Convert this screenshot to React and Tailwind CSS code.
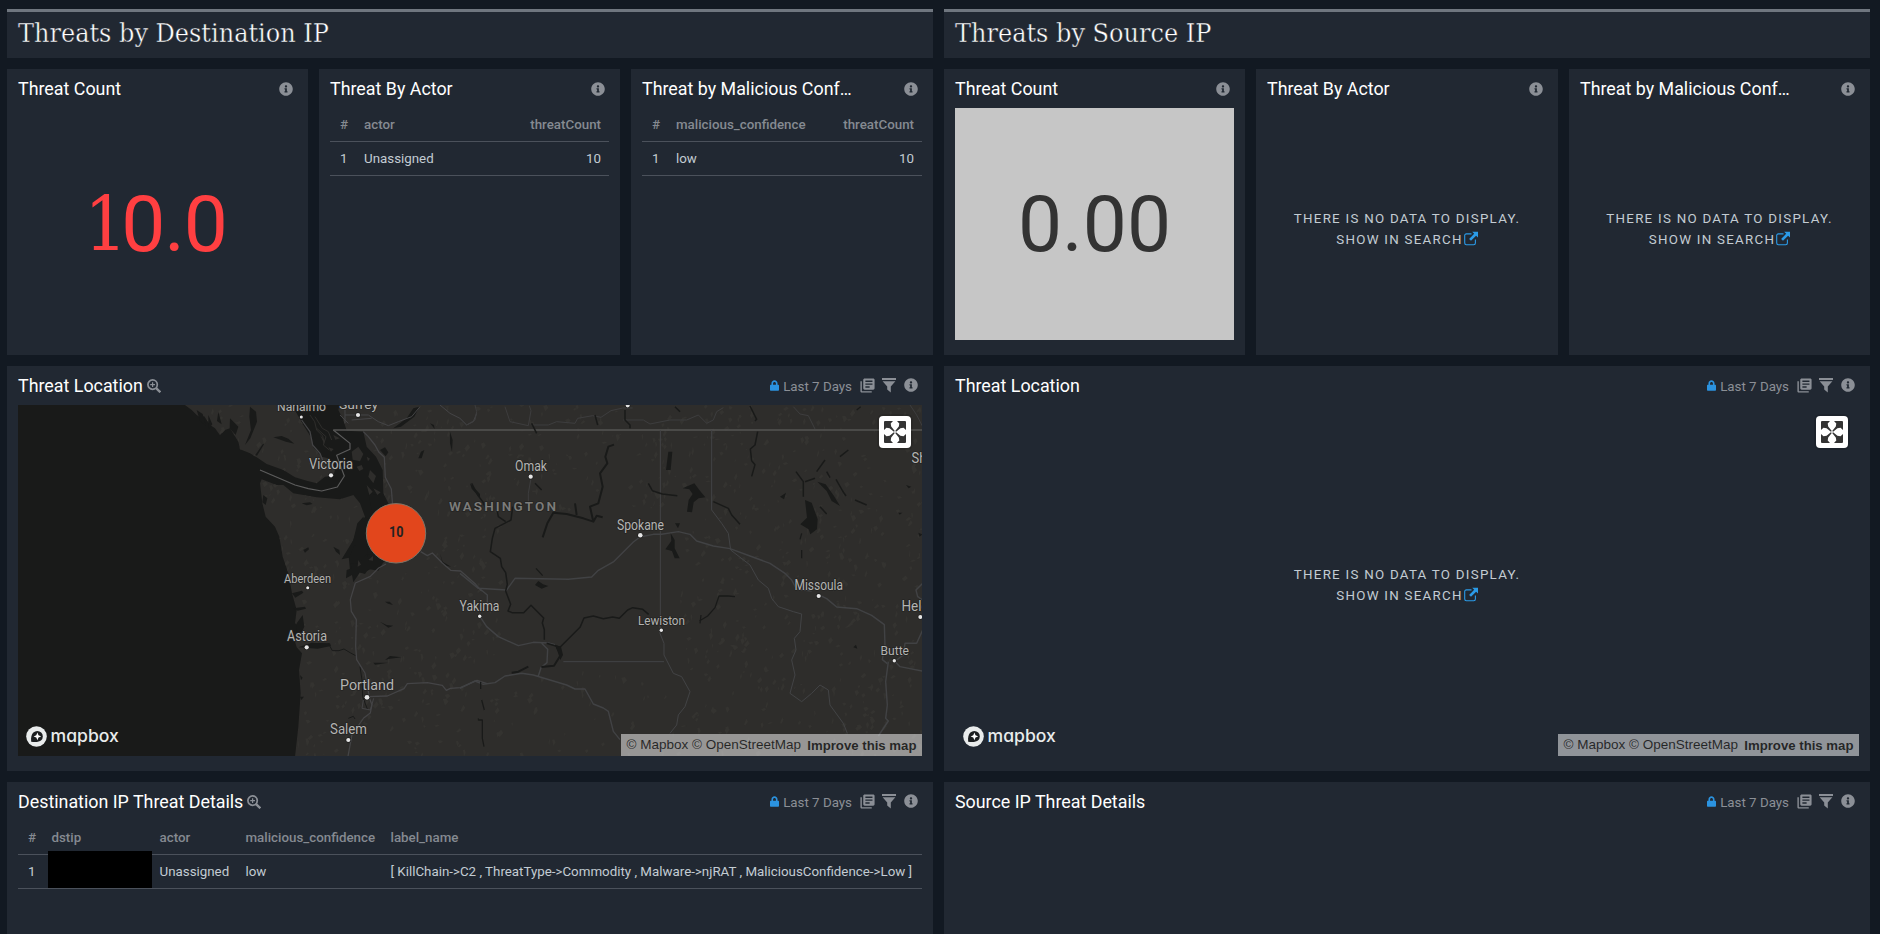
import { FaInfoCircle, FaLock } from "react-icons/fa";
import { MdLibraryBooks } from "react-icons/md";

/* ---------- icons ---------- */

function FilterIcon() {
  return (
    <svg className="h-[15px] w-[14px]" viewBox="0 0 14 15" fill="currentColor">
      <path d="M0 0h14v2H0z" />
      <path d="M0.6 3.2h12.8L8.8 8.6V14.6L5.2 11.6V8.6z" />
    </svg>
  );
}

function ZoomIcon() {
  return (
    <svg className="h-[14px] w-[14px] text-[#8b8f96]" viewBox="0 0 14 14" fill="none" stroke="currentColor">
      <circle cx="5.6" cy="5.6" r="4.7" strokeWidth="1.7" />
      <path d="M5.6 3.2v4.8M3.2 5.6h4.8" strokeWidth="1.2" />
      <path d="M9.1 9.1l4.2 4.2" strokeWidth="2.3" />
    </svg>
  );
}

function ExternalIcon() {
  return (
    <svg className="ml-px inline-block h-[15px] w-[14px] align-[-2px] text-[#2b9be8]" viewBox="0 0 14 15" fill="none">
      <path d="M7.5 2.9H2.4C1.4 2.9 0.7 3.6 0.7 4.6v7.4c0 1 .7 1.7 1.7 1.7h7.3c1 0 1.7-.7 1.7-1.7V8.4" stroke="currentColor" strokeWidth="1.1" />
      <path d="M8.2 0.8H14V6.6L12.1 4.7 7 9.8 5.1 7.9 10.2 2.8z" fill="currentColor" />
    </svg>
  );
}

function ExpandIcon() {
  return (
    <svg className="h-[22px] w-[22px]" viewBox="0 0 22 22" fill="#333">
      {[0, 90, 180, 270].map((a) => (
        <path key={a} transform={`rotate(${a} 11 11)`} d="M1 0H9L6.7 2.5 7.2 5.6 10.8 9.9 9.9 10.8 5.6 7.2 2.5 6.7 0 9V1A1 1 0 0 1 1 0z" />
      ))}
    </svg>
  );
}

/* ---------- panel pieces ---------- */

function Toolbar() {
  return (
    <div className="flex items-center text-[#8b8f96]">
      <FaLock className="mr-[4px] h-[11px] w-[9px] text-[#2b93e0]" />
      <span className="mr-[6.5px] pt-[2px] text-[13.33px]">Last 7 Days</span>
      <MdLibraryBooks className="mr-[6.5px] size-[17px]" />
      <span className="mr-[7.5px]">
        <FilterIcon />
      </span>
      <FaInfoCircle className="size-[14px]" />
    </div>
  );
}

function Panel({ title, zoom, full, className = "", children }) {
  return (
    <section className={`flex min-w-0 flex-col bg-[#212832] px-[11px] ${className}`}>
      <header className="flex h-[39px] shrink-0 items-center justify-between pr-[4.5px]">
        <h2 className="flex items-center gap-1 whitespace-nowrap pt-px text-[17.85px] leading-[20px] text-white">
          {title}
          {zoom && <ZoomIcon />}
        </h2>
        {full ? <Toolbar /> : <FaInfoCircle className="size-[14px] text-[#8b8f96]" />}
      </header>
      {children}
    </section>
  );
}

function BigNumber({ className, children }) {
  return (
    <div className={`flex h-[232px] items-center justify-center text-[78.5px] leading-none ${className}`}>{children}</div>
  );
}

function NoData({ className }) {
  return (
    <div className={`flex flex-col items-center justify-center pt-[9px] text-[13.33px] leading-[21px] tracking-[1.26px] text-[#c3ccd3] ${className}`}>
      <span>THERE IS NO DATA TO DISPLAY.</span>
      <span>
        SHOW IN SEARCH
        <ExternalIcon />
      </span>
    </div>
  );
}

function CountTable({ field, value }) {
  return (
    <div className="text-[13.33px] text-[#c3ccd3]">
      <div className="flex h-[34px] items-center border-b border-[#4b515b] pr-2 pl-[10px] font-medium text-[#858a91]">
        <span className="w-6">#</span>
        <span className="flex-1">{field}</span>
        <span>threatCount</span>
      </div>
      <div className="flex h-[34px] items-center border-b border-[#4b515b] pr-2 pl-[10px]">
        <span className="w-6">1</span>
        <span className="flex-1">{value}</span>
        <span>10</span>
      </div>
    </div>
  );
}

/* ---------- map ---------- */

const CITIES = [
  ["Nanaimo", 277, 411.3, 49, 12.5],
  ["Surrey", 339, 409, 39, 13.5],
  ["Victoria", 309, 469, 44, 13.8],
  ["Aberdeen", 284, 582.7, 47, 12.7],
  ["Astoria", 287, 641.3, 40, 13.8],
  ["Portland", 340, 690.3, 54, 14.8],
  ["Salem", 330, 734, 37, 13.8],
  ["Omak", 515, 471, 32, 13.8],
  ["Spokane", 617, 529.5, 47, 13.8],
  ["Missoula", 794.5, 590, 48.5, 13.8],
  ["Yakima", 459.5, 610.7, 40, 13.8],
  ["Lewiston", 638, 624.7, 47, 13.3],
  ["Helena", 901.5, 610.7, 42, 13.8],
  ["Butte", 880.5, 654.7, 28.5, 13.3],
  ["Shelby", 911.5, 463, 38, 13.8],
];

const DOTS = [
  [301.3, 417, 1.5], [358, 415, 2.1], [331, 475.3, 2.1], [307.7, 587.7, 1.5], [306.7, 647.3, 2.1],
  [367, 697.3, 2.4], [348.3, 740, 2.1], [530.7, 476.7, 2.1], [627.7, 405.3, 2.1], [640.3, 535.3, 2.3],
  [818.7, 596, 2.1], [479.7, 616.3, 1.7], [661.3, 630.3, 1.7], [920.3, 617, 2], [894.3, 660.7, 1.7],
];

function makeTerrain() {
  let seed = 42;
  const rnd = () => {
    seed = (seed * 1664525 + 1013904223) % 4294967296;
    return seed / 4294967296;
  };
  let d = "";
  for (let i = 0; i < 1500; i++) {
    const x = 190 + rnd() * 735;
    const y = 405 + rnd() * 351;
    const keep = rnd();
    const l = 1.5 + rnd() * 6;
    const w = 0.8 + rnd() * 3;
    const t = rnd() * 2;
    const basin = x > 500 && x < 680 && y > 510 && y < 660;
    if (basin || (x < 690 && y > 640 && x > 470 && keep > 0.35)) continue;
    const f = (n) => n.toFixed(1);
    d += `M${f(x)} ${f(y)}l${f(w)} ${f(-l * t * 0.5)}l${f(w * 0.6)} ${f(l * 0.5)}l${f(-w)} ${f(l * 0.6)}z`;
  }
  return d;
}
const TERRAIN = makeTerrain();

function MapDrawing() {
  return (
    <svg className="block h-[351px] w-[904px]" viewBox="18 405 904 351">
      <defs>
        <clipPath id="land">
          <path transform="translate(0 360) scale(.33333)" d="M548 130L575 150 590 165 605 175 612 168 630 195 645 205 660 226 675 210 690 205 715 245 720 268 750 280 770 292 800 312 850 330 885 352 920 362 950 370 975 350 1000 348 1005 330 985 295 965 290 940 262 935 235 910 195 890 160 870 130zM885 1190L895 1100 902 1000 897 930 906 880 890 862 885 845 905 830 900 800 885 790 890 750 876 700 865 640 848 590 838 530 825 500 797 470 787 430 780 370 785 358 830 375 850 375 880 400 950 412 1020 418 1060 405 1080 430 1095 470 1075 500 1060 540 1045 580 1050 630 1090 640 1140 610 1170 600 1170 440 1150 400 1148 330 1128 290 1100 260 1090 215 1040 212 1030 180 1015 150 1020 130H2800V1190z" />
        </clipPath>
      </defs>
      <path d="M18 405h904v351H18z" fill="#191a19" />
      <g clipPath="url(#land)">
        <path d="M18 405h904v351H18z" fill="#2e2d2b" />
        <path d={TERRAIN} fill="#343330" />
      </g>

      {/* coast and Puget Sound, western half */}
      <g transform="translate(0 360) scale(.33333)" strokeLinejoin="round">
        <g fill="#191a19">
          <path d="M820 232l25-4 20 8 18 15-25-6zM590 150l18 12 10 35-18-15zM625 165l12 28-12 15zM655 155l10 38-14-10zM690 175l25 25-8 25-18-20zM750 140l18 15 3 30-20 50-16 20 18-45-5-40z" />
          <path d="M766 285l22-32 5-2-22 36zM790 405l12 10-5 20-10-8zM905 430l25-3 8 5-18 4zM910 570l15-8 2 6-12 10z" />
          <path d="M1090 470l-18 20-12 50-35 58 22-5 15-35 25-22 15-25zM1000 560l18 10 2 15-12-10z" />
          <path d="M1095 470l18 12 2 40-15 30 5 50 40-30 10-20zM1040 630l15-5-4-15 24 2 25-30 30 5 45-15 15 15-40 20-15 25-30-5-10 15-15-5-20 30-4-22-18 10z" />
          <path d="M1140 270l15-8 10 15-8 12zM1105 400l35 5 20 25-15 50-30-30zM1255 295l8-20 10-5-8 25zM1350 215l8 25-2 35-6-25zM1290 190l12 5 2 12z" />
          <path d="M1180 205l40-30 20-30 18-5-15 30-40 30zM1410 370l30 32v12l-25-28z" />
          <path d="M876 700l30-8 4 6-24 15zM880 745l35-5 3 6-25 6zM890 790l18-25 5 35-12 25-12-8zM895 862l40-14 55 2 3 8-40 8-30-2z" />
          <path d="M1155 725l14 0 10 10-15-4zM1140 785l20 10 20 2-15 6zM1120 908l45 0-40 6zM1155 900l15-12 35 4-35 4zM1320 580l8 25 25 15-15-3-10-5zM900 1010l12 0-8 10zM1055 1075l15-5M900 945l8 8-5 8z" />
        </g>
        <g fill="#2e2d2b">
          <path d="M1055 275l20-15 15 22-10 22-22-5zM1070 320l15-5 5 12-12 6zM1110 330l18 18-8 22-15-20zM1100 375l18 20-10 10zM1120 385l22 12-10 8zM1100 290l10 6-6 8zM985 262l16 5-8 8zM960 225l14 16-4 4zM1000 225l20 10-14 4zM1040 190l10 4-6 6z" />
          <path d="M1110 500l18 20-8 20-10-10zM1075 600l8 14-10 6zM1105 600l14-12 0 14z" />
        </g>
        <path d="M930 165l14 20 6 25 18 18 4 22M945 170l22 35 18 10 10 25M950 205l28 25-8 25 18 15" stroke="#2e2d2b" strokeWidth="3" fill="none" />
        <path d="M985 850l12 22 20 0 15-5 20 12 15 8M1080 920l6 40 2 50 15 40M1045 1075l15-6 5 8M1435 1075v6" stroke="#191a19" strokeWidth="3" fill="none" />
        <g fill="none" stroke="#444446" strokeWidth="3.8">
          <path d="M905 180l25 35 8 40 22 25 8 20M1090 215l15 15 20 25 12 22 16 15 3 60 18 35 4 50" />
          <path d="M1158 612l-22 12-25 25-45 20-15 50 3 35 15 25-2 80 3 40 25 40 10 55 3 20 8 20-5 25-20 15-35 50-12 65M1102 1010l60-2 50-22 10-15 60-3 45 8 12 15 12-6 30-2 50-22 30 10" />
          <path d="M1262 575l20 12 15-8 30 30 25 22 30 2 45 40 18 20" />
          <path d="M1020 165l25 25M1035 165l70 0 30 20 30 12 30-12 40-15 25-30M1035 150v40M1055 180l60-5M1320 135l30 25 30 15 20 20 20-10 10-25" strokeWidth="3" />
          <path d="M1090 1020l-4 25 25 5 10-35" strokeWidth="3" />
        </g>
        <path d="M780 330L885 375 925 386 965 393 1012 381 1033 348 1010 286 1050 268V250L1000 210" stroke="#5c5c5c" strokeWidth="3.5" fill="none" />
        <path d="M1000 210H2770" stroke="#555553" strokeWidth="5" />
      </g>

      {/* interior, eastern half */}
      <g transform="translate(460 360) scale(.33333)" fill="none" strokeLinejoin="round">
        <g stroke="#424345" strokeWidth="3">
          <path d="M601 210V770L600 820 612 850V885L640 940 665 950 690 995 675 1040 655 1065 650 1095 630 1120M310 905H612M755 210V450L785 490 805 520 812 570 870 615 895 660 925 685 935 715 955 740 1000 755 1025 762 1020 815 1003 835 1008 870 995 900 1005 945 990 1000 1025 1025 1055 1000 1080 975 1105 990 1110 1035 1150 1090 1162 1120" />
          <path d="M0 175L20 195 45 180 50 155 45 135M135 140l15 45 55 12 8-45-5-15M215 195l50 0 25-10 55 5 8-15 45-8 25 5 30-20 35-8 30 0M490 180l60 0 20 12 60-12 50 0 35-15 25 25 20-10 10-25 20-12M1000 140l20 22 25 5 20 40M1350 135l20 30 18 35M205 430v-30l8-45" stroke="#3d3d3e" />
        </g>
        <g stroke="#414244" strokeWidth="4.3">
          <path d="M0 640l55 45 85 5 25-35 160 3 70-7 20-20 45-25 60-60 20-15 40-8 25 0 50-8 35 8 20 20 50 15 50 8 60 22 60 22 45 30 20 20 15 28 45 5M1080 706l20 10 30 25 60 5 45 20 38 28 2 60-8 45 15 12" />
          <path d="M60 770l20 30 35 30 60 27 45-10 45 2 20 5M60 687l22 18v25M245 850l18 18-2 40-18 15-8 25M0 985l45-22 25 10 35-5 30-20 50-8 35 5 100 30 25 12h30l25 45 30 12 15 10 15 60 20 25" />
          <path d="M1303 902l17 18 70 14M1285 905l-8 60 5 70-5 40 8 8-30 45M1310 900l20-15 5-35h35l18-40M1388 670l-20 20 5 20 15 10" />
        </g>
        <g stroke="#191a19" strokeWidth="6">
          <path d="M462 254L445 260 436 290 442 310 420 340 428 380 415 430 390 440 400 485 370 475 320 462 280 458 262 490 248 532M400 485l10-18 18 5M345 430l5 35" />
          <path d="M158 440l-5 40-48 25-8 30-6 40 30 20 4 25 12 18 5 35-5 20 15 40-8 20 12 5h35l22-22 38 38-4 15 6 20v30M110 445l5 25 22 15M35 370l18 35 15 20 12 25" strokeWidth="4.5" />
          <path d="M260 850l40 12 60-60 12-28 28-6 30 8 28-5 20 4 25-25 15-7 30 5 18 15" strokeWidth="4.5" />
          <path d="M290 860l12 25-20 32-38 4M205 920l-30 15-20 3" strokeWidth="6" />
          <path d="M495 150l0 30 15 15v10M645 140l15 15M870 138l20 40-5 5M893 215l-8 40-14 12 4 35 10 12-10 35M565 370l12 22 30 10 45 5M760 425l45 20 10 20 25 28M1008 335l22 30v45M1035 365l30-10M1070 335l25-35M1140 290l25-20M1100 335l10 18M1128 358l20 35 10 15M1185 420l35 15M1080 440l20 22M405 165l8 30M215 190l15 30M225 370l20 20" strokeWidth="4.5" />
          <path d="M825 710l-20-2-28 0-12 35-22 25-25 15M720 790l3-25M1025 520l-5 18M1025 570l0 25M228 625l20 22M1190 150l12-10M62 965v22M65 1020l8 30M55 1080l12 0v55l5 25" strokeWidth="3.8" />
        </g>
        <g fill="#191a19">
          <path d="M625 275l12 0-5 55-14 0zM668 385l35-15 15 20 18 22-20 3-15 12-5 30-15-2 5-35 12-18-10-14zM632 520l12 20 0 25 15 30-15 0-8-22-20-5 18-25zM225 675l10-12 14 10 16 5-20 8zM1035 420l20 8 18 50-2 30-20 15-5-15-25-15 20-20z" />
          <path d="M1072 365l25 8 25 35 18 30-25-15-15-30zM960 410l18-12-6 20zM1338 375l16 5-8 5zM1315 458l12 0-8 6zM1375 518l12 5-8 8zM1180 862l8-8 4 12zM645 490l15 0-6 15zM285 855l18 5 6 25-8 15-8-25z" />
        </g>
      </g>

      <g fontFamily="Roboto, sans-serif" fill="#b4b4b2" stroke="#232322" strokeWidth="1.6" paintOrder="stroke" strokeLinejoin="round">
        {CITIES.map(([name, x, y, w, size]) => (
          <text key={name} x={x} y={y} fontSize={size} textLength={w} lengthAdjust="spacingAndGlyphs">
            {name}
          </text>
        ))}
        <text x="449" y="511.3" fontSize="13.5" fontWeight="600" textLength="107" fill="#7c7c7a">
          WASHINGTON
        </text>
      </g>
      {DOTS.map(([x, y, r]) => (
        <circle key={x} cx={x} cy={y} r={r} fill="#e6e6e6" stroke="#1c1c1c" strokeWidth="1.2" paintOrder="stroke" />
      ))}
      <circle cx="396" cy="533.3" r="29.7" fill="#e2461c" stroke="#7d7568" strokeWidth="1" />
      <text x="389" y="537" fontFamily="Roboto, sans-serif" fontWeight="700" fontSize="14.3" textLength="14.5" lengthAdjust="spacingAndGlyphs" fill="#222">
        10
      </text>
    </svg>
  );
}

function MapboxLogo() {
  return (
    <div className="absolute bottom-[9px] left-[8px] flex h-[21px] items-center">
      <svg className="size-[21px]" viewBox="0 0 21 21">
        <circle cx="10.5" cy="10.5" r="10.3" fill="#e9ecec" />
        <path d="M5.2 15.8C4.6 11.5 5.6 8.3 7.4 6.5a5.5 5.5 0 0 1 7.8 7.8C13.4 16 9.7 16.5 5.2 15.8z" fill="#1b1e20" />
        <path d="M11.4 6.6l1.1 2.7 2.7 1.1-2.7 1.1-1.1 2.7-1.1-2.7-2.7-1.1 2.7-1.1z" fill="#fff" />
      </svg>
      <span className="ml-[3.5px] pb-[2px] font-['Inter',sans-serif] text-[17.6px] leading-none font-medium text-[#e9ecec] [font-feature-settings:'cv11']">
        mapbox
      </span>
    </div>
  );
}

function MapFrame({ children }) {
  return (
    <div className="relative h-[351px] overflow-hidden">
      {children}
      <MapboxLogo />
      <div className="absolute right-0 bottom-0 flex h-[22px] w-[301px] items-center justify-between bg-white/50 px-[5.5px] pt-px font-['Liberation_Sans',sans-serif] whitespace-nowrap text-black/75">
        <span className="text-[13.5px]">© Mapbox © OpenStreetMap</span>
        <span className="text-[13.2px] font-bold">Improve this map</span>
      </div>
      <div className="absolute top-[11px] right-[11px] flex size-8 items-center justify-center rounded bg-white shadow-[0_0_0_2px_rgba(0,0,0,0.1)]">
        <ExpandIcon />
      </div>
    </div>
  );
}

/* ---------- page ---------- */

function Heading({ children }) {
  return (
    <div className="h-[49px] border-t-[3px] border-[#6f767f] bg-[#212832] pt-[5px] pl-[11px]">
      <h1 className="font-['DejaVu_Serif_Condensed','DejaVu_Serif',serif] text-[26.7px] leading-[32px] whitespace-nowrap text-white [-webkit-text-stroke:0.4px_#212832]">
        {children}
      </h1>
    </div>
  );
}

export default function App() {
  return (
    <main className="grid h-[934px] w-[1880px] grid-cols-[926px_926px] content-start gap-[11px] overflow-hidden bg-[#121922] pt-[9px] pl-[7px] font-['Roboto',sans-serif]">
      <Heading>Threats by Destination IP</Heading>
      <Heading>Threats by Source IP</Heading>

      <div className="grid h-[286px] grid-cols-[301px_301px_302px] gap-[11px]">
        <Panel title="Threat Count">
          <BigNumber className="pr-[4px] text-[#ff3f41]">
            <span className="font-['DejaVu_Serif_Condensed','DejaVu_Serif',serif] text-[75px] tracking-[-6px]">1</span>
            <span className="tracking-[-1.2px]">0.0</span>
          </BigNumber>
        </Panel>
        <Panel title="Threat By Actor">
          <CountTable field="actor" value="Unassigned" />
        </Panel>
        <Panel title="Threat by Malicious Conf…">
          <CountTable field="malicious_confidence" value="low" />
        </Panel>
      </div>

      <div className="grid h-[286px] grid-cols-[301px_302px_301px] gap-[11px]">
        <Panel title="Threat Count">
          <BigNumber className="bg-[#c6c6c6] text-[#333]">0.00</BigNumber>
        </Panel>
        <Panel title="Threat By Actor">
          <NoData className="h-[232px]" />
        </Panel>
        <Panel title="Threat by Malicious Conf…">
          <NoData className="h-[232px]" />
        </Panel>
      </div>

      <Panel title="Threat Location" zoom full className="h-[405px]">
        <MapFrame>
          <MapDrawing />
        </MapFrame>
      </Panel>
      <Panel title="Threat Location" full className="h-[405px]">
        <MapFrame>
          <NoData className="h-[351px]" />
        </MapFrame>
      </Panel>

      <Panel title="Destination IP Threat Details" zoom full className="h-[152px]">
        <div className="text-[13.33px] whitespace-nowrap text-[#c3ccd3]">
          <div className="grid h-[34px] grid-cols-[23.5px_108px_86px_145px_1fr] items-center border-b border-[#4b515b] pl-[10px] font-medium text-[#858a91]">
            <span>#</span>
            <span>dstip</span>
            <span>actor</span>
            <span>malicious_confidence</span>
            <span>label_name</span>
          </div>
          <div className="grid h-[34px] grid-cols-[23.5px_108px_86px_145px_1fr] items-center border-b border-[#4b515b] pl-[10px]">
            <span>1</span>
            <span className="relative -mt-[5px] -ml-[4px] h-[37px] w-[104px] bg-black" />
            <span>Unassigned</span>
            <span>low</span>
            <span>{"[ KillChain->C2 , ThreatType->Commodity , Malware->njRAT , MaliciousConfidence->Low ]"}</span>
          </div>
        </div>
      </Panel>
      <Panel title="Source IP Threat Details" full className="h-[152px]" />
    </main>
  );
}
